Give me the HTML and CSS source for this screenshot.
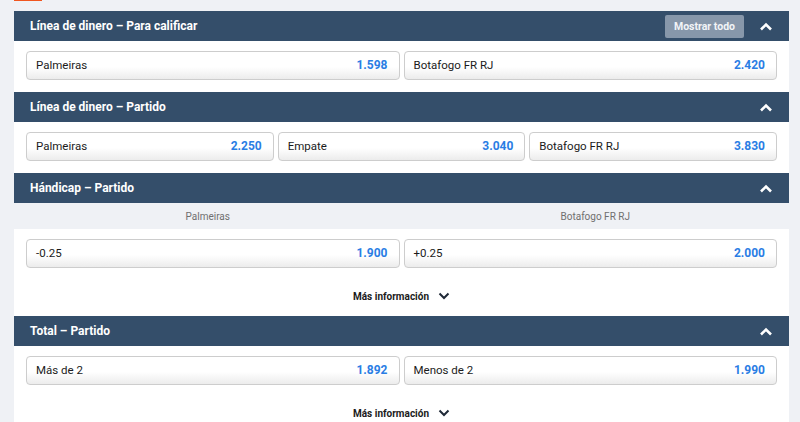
FILE: index.html
```html
<!DOCTYPE html>
<html lang="es">
<head>
<meta charset="utf-8">
<link rel="stylesheet" href="styles.css">
</head>
<body>
<div class="wrap">
  <div class="tab"></div>

  <section class="market">
    <header class="mhead">
      <span class="mtitle">Línea de dinero – Para calificar</span>
      <div class="mtools">
        <button class="showall">Mostrar todo</button>
        <svg class="chev" width="14" height="9" viewBox="0 0 14 9"><polyline points="2,7.5 7,2.5 12,7.5" fill="none" stroke="#fff" stroke-width="2.6"/></svg>
      </div>
    </header>
    <div class="mbody">
      <div class="row">
        <div class="odd"><span class="lbl">Palmeiras</span><span class="val">1.598</span></div>
        <div class="odd"><span class="lbl">Botafogo FR RJ</span><span class="val">2.420</span></div>
      </div>
    </div>
  </section>

  <section class="market">
    <header class="mhead">
      <span class="mtitle">Línea de dinero – Partido</span>
      <div class="mtools">
        <svg class="chev" width="14" height="9" viewBox="0 0 14 9"><polyline points="2,7.5 7,2.5 12,7.5" fill="none" stroke="#fff" stroke-width="2.6"/></svg>
      </div>
    </header>
    <div class="mbody">
      <div class="row">
        <div class="odd"><span class="lbl">Palmeiras</span><span class="val">2.250</span></div>
        <div class="odd"><span class="lbl">Empate</span><span class="val">3.040</span></div>
        <div class="odd"><span class="lbl">Botafogo FR RJ</span><span class="val">3.830</span></div>
      </div>
    </div>
  </section>

  <section class="market">
    <header class="mhead">
      <span class="mtitle">Hándicap – Partido</span>
      <div class="mtools">
        <svg class="chev" width="14" height="9" viewBox="0 0 14 9"><polyline points="2,7.5 7,2.5 12,7.5" fill="none" stroke="#fff" stroke-width="2.6"/></svg>
      </div>
    </header>
    <div class="cols">
      <span>Palmeiras</span>
      <span>Botafogo FR RJ</span>
    </div>
    <div class="mbody">
      <div class="row">
        <div class="odd"><span class="lbl">-0.25</span><span class="val">1.900</span></div>
        <div class="odd"><span class="lbl">+0.25</span><span class="val">2.000</span></div>
      </div>
      <div class="more">Más información
        <svg width="12" height="8" viewBox="0 0 12 8"><polyline points="1.5,1.5 6,6 10.5,1.5" fill="none" stroke="#1f2937" stroke-width="2"/></svg>
      </div>
    </div>
  </section>

  <section class="market">
    <header class="mhead">
      <span class="mtitle">Total – Partido</span>
      <div class="mtools">
        <svg class="chev" width="14" height="9" viewBox="0 0 14 9"><polyline points="2,7.5 7,2.5 12,7.5" fill="none" stroke="#fff" stroke-width="2.6"/></svg>
      </div>
    </header>
    <div class="mbody">
      <div class="row">
        <div class="odd"><span class="lbl">Más de 2</span><span class="val">1.892</span></div>
        <div class="odd"><span class="lbl">Menos de 2</span><span class="val">1.990</span></div>
      </div>
      <div class="more">Más información
        <svg width="12" height="8" viewBox="0 0 12 8"><polyline points="1.5,1.5 6,6 10.5,1.5" fill="none" stroke="#1f2937" stroke-width="2"/></svg>
      </div>
    </div>
  </section>
</div>
</body>
</html>
```

FILE: styles.css
```css
* { box-sizing: border-box; }
html, body {
  margin: 0;
  padding: 0;
  background: #eff1f5;
  font-family: Roboto, "Liberation Sans", sans-serif;
  color: #1b1b1b;
}
.wrap {
  padding: 0 11px 0 14px;
}
.tab {
  width: 28px;
  height: 1px;
  background: #f0561f;
  margin-bottom: 10px;
}
.market {
  background: #fff;
}
.mhead {
  height: 30px;
  background: #344e6a;
  color: #fff;
  display: flex;
  align-items: center;
  justify-content: space-between;
  padding: 0 16px;
}
.mtitle {
  font-size: 12px;
  font-weight: 700;
}
.mtools {
  display: flex;
  align-items: center;
  gap: 15px;
  margin-right: 0;
}
.showall {
  width: 79px;
  height: 23px;
  border: 0;
  border-radius: 2px;
  background: #8797aa;
  color: #f2f4f7;
  font-family: Roboto, "Liberation Sans", sans-serif;
  font-size: 10.5px;
  font-weight: 700;
  padding: 0;
}
.chev { display: block; }
.mbody {
  padding: 10px 12px 12px;
}
.row {
  display: flex;
  gap: 4px;
}
.odd {
  flex: 1;
  height: 29px;
  border: 1px solid #cdcdcd;
  border-radius: 4px;
  background: linear-gradient(#ffffff 0%, #ffffff 55%, #ececec 100%);
  display: flex;
  align-items: center;
  justify-content: space-between;
  padding: 0 11px 2px 9px;
}
.lbl {
  font-size: 11.5px;
  color: #1b1b1b;
}
.val {
  font-size: 12px;
  font-weight: 700;
  color: #2a7de4;
}
.cols {
  height: 26px;
  background: #eff1f5;
  display: grid;
  grid-template-columns: 1fr 1fr;
  align-items: center;
  text-align: center;
  font-size: 10px;
  color: #6f6f6f;
}
.more {
  margin-top: 20px;
  height: 16px;
  display: flex;
  align-items: center;
  justify-content: center;
  gap: 9px;
  font-size: 10px;
  font-weight: 700;
  color: #1b1b1b;
}
```
